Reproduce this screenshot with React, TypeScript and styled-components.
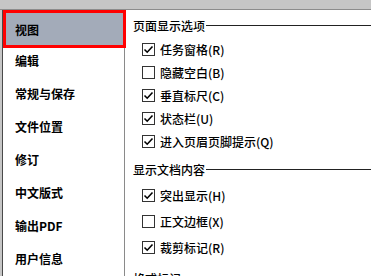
import React from "react";
import styled, { createGlobalStyle } from "styled-components";

const Global = createGlobalStyle`
  html, body { margin: 0; padding: 0; }
  body {
    width: 371px;
    height: 276px;
    overflow: hidden;
    background: #c6c6c6;
    font-family: "Noto Sans CJK SC", "Microsoft YaHei", sans-serif;
    font-size: 12px;
    color: #000;
  }
`;

const Window = styled.div`
  display: flex;
  flex-direction: column;
  width: 371px;
  height: 276px;
  overflow: hidden;
`;

const TopBar = styled.div`
  height: 9px;
  flex: none;
  background: #c6c6c6;
  border-bottom: 1px solid #8c8c8c;
`;

const Main = styled.div`
  display: flex;
  flex: 1;
  margin-left: 2px;
  border-left: 1px solid #4a4a4a;
  background: #fff;
  min-height: 0;
  overflow: hidden;
`;

const Nav = styled.nav`
  width: 121px;
  flex: none;
  border-right: 1px solid #8a8a8a;
  padding-top: 3px;
  display: flex;
  flex-direction: column;
  background: #fff;
`;

const NavItem = styled.div<{ $active?: boolean }>`
  flex: none;
  height: ${(p) => (p.$active ? "38px" : "33px")};
  box-sizing: border-box;
  display: flex;
  align-items: center;
  padding-left: ${(p) => (p.$active ? "9px" : "12px")};
  font-weight: 600;
  white-space: nowrap;
  position: relative;
  ${(p) =>
    p.$active
      ? `
    margin: -3px -2px -4px 0;
    border: 3px solid #ff0000;
    background: #a3abb9;
    z-index: 1;
  `
      : ""}
`;

const Content = styled.div`
  flex: 1;
  display: flex;
  flex-direction: column;
  padding-top: 7px;
  min-width: 0;
`;

const SectionTitle = styled.div<{ $top?: number }>`
  flex: none;
  display: flex;
  align-items: center;
  height: 16px;
  padding-left: 8px;
  margin-top: ${(p) => p.$top ?? 0}px;
  margin-bottom: 5px;
  font-weight: 500;
  white-space: nowrap;
  &::after {
    content: "";
    flex: 1;
    height: 1px;
    background: #222;
    margin-left: 1px;
  }
`;

const Row = styled.label<{ $h: number }>`
  flex: none;
  display: flex;
  align-items: center;
  height: ${(p) => p.$h}px;
  padding-left: 17px;
  gap: 5px;
  font-weight: 500;
  white-space: nowrap;
`;

const Box = styled.span`
  width: 13px;
  height: 13px;
  box-sizing: border-box;
  border: 1px solid #333;
  background: #fff;
  display: inline-flex;
  align-items: center;
  justify-content: center;
  flex: none;
`;

const Check = () => (
  <svg width="11" height="11" viewBox="0 0 11 11">
    <polyline
      points="1.5,5.5 4.2,8.2 9.5,2.5"
      fill="none"
      stroke="#000"
      strokeWidth="1.6"
    />
  </svg>
);

const Option = ({ label, checked, h }: { label: string; checked: boolean; h: number }) => (
  <Row $h={h}>
    <Box>{checked && <Check />}</Box>
    {label}
  </Row>
);

const navItems = ["视图", "编辑", "常规与保存", "文件位置", "修订", "中文版式", "输出PDF", "用户信息"];

export default function App() {
  return (
    <>
      <Global />
      <Window>
        <TopBar />
        <Main>
          <Nav>
            {navItems.map((t, i) => (
              <NavItem key={t} $active={i === 0}>
                {t}
              </NavItem>
            ))}
          </Nav>
          <Content>
            <SectionTitle>页面显示选项</SectionTitle>
            <Option h={23} checked label="任务窗格(R)" />
            <Option h={23} checked={false} label="隐藏空白(B)" />
            <Option h={23} checked label="垂直标尺(C)" />
            <Option h={23} checked label="状态栏(U)" />
            <Option h={23} checked label="进入页眉页脚提示(Q)" />
            <SectionTitle $top={8}>显示文档内容</SectionTitle>
            <Option h={26} checked label="突出显示(H)" />
            <Option h={26} checked={false} label="正文边框(X)" />
            <Option h={26} checked label="裁剪标记(R)" />
            <SectionTitle $top={10}>格式标记</SectionTitle>
          </Content>
        </Main>
      </Window>
    </>
  );
}
